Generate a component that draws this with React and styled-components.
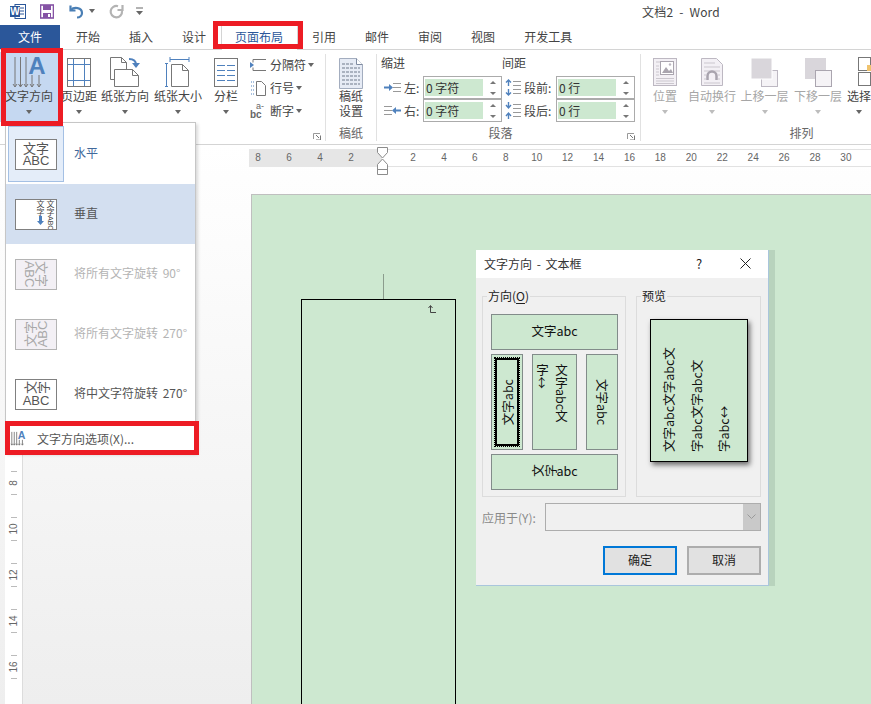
import React from 'react';
import styled, { createGlobalStyle } from 'styled-components';

const Global = createGlobalStyle`
  html, body { margin: 0; padding: 0; background: #fff; }
  body { font-family: "Noto Sans CJK SC", "Liberation Sans", sans-serif; font-size: 12px; color: #444; }
`;

const Win = styled.div`
  position: relative;
  width: 871px;
  height: 704px;
  overflow: hidden;
  background: #fff;
`;

/* title bar */
const TitleBar = styled.div`
  display: flex;
  align-items: center;
  box-sizing: border-box;
  height: 25px;
  padding: 0 0 3px 10px;
`;
const Qat = styled.span`
  display: flex;
  margin-left: ${p => p.$ml || 0}px;
`;
const Title = styled.div`
  margin-left: auto;
  margin-right: 151px;
  color: #444;
  white-space: nowrap;
  word-spacing: 3px;
  letter-spacing: 0.2px;
`;
const Caret = styled.i`
  display: block;
  width: 0;
  height: 0;
  border: 3.5px solid transparent;
  border-bottom: 0;
  border-top: 4px solid ${p => (p.$off ? '#bdbdbd' : '#666')};
`;

/* tabs */
const TabBar = styled.div`
  display: flex;
  height: 25px;
  box-sizing: border-box;
  border-bottom: 1px solid #d4d4d4;
`;
const FileTab = styled.div`
  width: 60px;
  margin-right: 1.5px;
  background: #2b579a;
  color: #fff;
  text-align: center;
  line-height: 24px;
`;
const Tab = styled.div`
  box-sizing: border-box;
  padding: 0 14.5px;
  height: 25px;
  line-height: 24px;
  color: ${p => (p.$on ? '#2b579a' : '#444')};
  background: ${p => (p.$on ? '#fff' : 'transparent')};
  box-shadow: ${p => (p.$on ? 'inset 1px 0 0 #d4d4d4, inset -1px 0 0 #d4d4d4' : 'none')};
`;

/* ribbon */
const Ribbon = styled.div`
  display: flex;
  height: 95px;
  box-sizing: border-box;
  border-bottom: 1px solid #d4d4d4;
`;
const Group = styled.div`
  position: relative;
  flex: none;
  display: flex;
  flex-direction: column;
  box-sizing: border-box;
  width: ${p => p.$w}px;
  height: 87px;
  margin-top: 4px;
  border-right: 1px solid ${p => (p.$last ? 'transparent' : '#e1e1e1')};
  padding-left: ${p => p.$pl || 0}px;
`;
const GroupBody = styled.div`
  display: flex;
  height: 72px;
`;
const GroupLabel = styled.div`
  text-align: center;
  line-height: 14px;
  color: #666;
  padding-right: ${p => p.$pr || 0}px;
`;
const Launcher = styled.svg`
  position: absolute;
  right: ${p => p.$r}px;
  top: 79px;
`;
const BigBtn = styled.div`
  flex: none;
  display: flex;
  flex-direction: column;
  align-items: center;
  width: ${p => p.$w}px;
  height: 68px;
  white-space: nowrap;
  color: ${p => (p.$off ? '#a6a6a6' : '#444')};
  background: ${p => (p.$on ? '#c5d8f1' : 'transparent')};
  box-shadow: ${p => (p.$on ? '0 -2px 0 #c5d8f1' : 'none')};
`;
const BigIcon = styled.div`
  display: flex;
  justify-content: center;
  box-sizing: border-box;
  height: 34px;
  width: 100%;
  padding-top: ${p => p.$pt}px;
  padding-left: ${p => p.$shift || 0}px;
`;
const BigText = styled.div`
  line-height: 16px;
  margin-bottom: 6px;
`;
const TwoLine = styled.div`
  line-height: 15px;
  text-align: center;
`;
const SmallCol = styled.div`
  display: flex;
  flex-direction: column;
  margin: -1px 0 0 4px;
`;
const SmallRow = styled.div`
  display: flex;
  align-items: center;
  gap: 4px;
  height: 23px;
  white-space: nowrap;
  & > i { margin-left: -2px; }
`;
const ParaGrid = styled.div`
  display: grid;
  grid-template-columns: 42px 79px 54px 79px;
  grid-template-rows: 22px 23px 23px;
`;
const ParaHead = styled.div`
  grid-column: ${p => p.$col};
  line-height: 18px;
`;
const ParaCell = styled.div`
  display: flex;
  align-items: center;
  gap: 3px;
  padding-left: 3px;
  white-space: nowrap;
`;
const Spin = styled.div`
  display: flex;
  align-items: center;
  box-sizing: border-box;
  border: 1px solid #ababab;
  background: #fff;
  padding-left: 1px;
`;
const SpinValue = styled.div`
  width: 58px;
  height: 17px;
  line-height: 17px;
  background: #cde8d0;
  color: #333;
  padding-left: 1px;
  box-sizing: border-box;
`;
const SpinArrows = styled.div`
  display: flex;
  flex-direction: column;
  gap: 8px;
  margin-left: 7px;
`;
const Tri = styled.i`
  display: block;
  width: 0;
  height: 0;
  border: 3px solid transparent;
  ${p => (p.$up ? 'border-top: 0; border-bottom: 3px solid #777;' : 'border-bottom: 0; border-top: 3px solid #777;')}
`;

/* workspace */
const Workspace = styled.div`
  position: relative;
  height: 559px;
  background: linear-gradient(#fff, #eee);
`;
const RulerRow = styled.div`
  display: flex;
  height: 18px;
  padding: 4px 0 0 249px;
`;
const RulerDark = styled.div`
  display: flex;
  flex: none;
  align-items: center;
  gap: 21px;
  width: 133px;
  box-sizing: border-box;
  padding-left: 4px;
  background: #e6e6e6;
`;
const RulerLight = styled.div`
  display: flex;
  flex: 1;
  align-items: center;
  gap: 20.93px;
  padding-left: 26px;
  background: #fff;
  box-shadow: inset 0 1px 0 #e2e2e2, inset 0 -1px 0 #e2e2e2;
`;
const RulerNum = styled.span`
  flex: none;
  display: flex;
  justify-content: center;
  width: 10px;
  font: 10px/12px "Liberation Sans", sans-serif;
  color: #666;
  white-space: nowrap;
`;
const Marker = styled.svg`
  position: absolute;
  left: 376px;
  top: 1px;
`;
const Desk = styled.div`
  display: flex;
  height: 537px;
`;
const VRuler = styled.div`
  flex: none;
  display: flex;
  flex-direction: column;
  box-sizing: border-box;
  width: 18px;
  height: 510px;
  margin: 27px 0 0 5px;
  padding-top: 277px;
  background: #fff;
  border-right: 1px solid #dcdcdc;
`;
const VCell = styled.div`
  flex: none;
  height: 46px;
  display: flex;
  flex-direction: column;
  align-items: center;
`;
const VTick = styled.i`
  display: block;
  width: 6px;
  height: 1px;
  background: #bbb;
`;
const VNum = styled.span`
  display: flex;
  align-items: center;
  justify-content: center;
  height: 22px;
  font: 10px/12px "Liberation Sans", sans-serif;
  color: #666;
  transform: rotate(-90deg);
`;
const PageSheet = styled.div`
  flex: 1;
  display: flex;
  flex-direction: column;
  box-sizing: border-box;
  margin: 27px 0 0 228px;
  padding: 79px 0 0 49px;
  background: #cde8d0;
  border-top: 1px solid #bfbfbf;
  border-left: 1px solid #bfbfbf;
`;
const Handle = styled.i`
  display: block;
  flex: none;
  width: 1px;
  height: 25px;
  margin-left: 82px;
  background: #8b9c8d;
`;
const TextBox = styled.div`
  flex: none;
  box-sizing: border-box;
  width: 155px;
  height: 440px;
  padding: 5px 0 0 126px;
  border: 1px solid #000;
`;

/* text direction menu */
const Menu = styled.div`
  position: absolute;
  left: 5px;
  top: 122px;
  box-sizing: border-box;
  width: 191px;
  height: 331px;
  padding-top: 1px;
  background: #fff;
  border: 1px solid #c6c6c6;
  box-shadow: 2px 2px 3px rgba(0, 0, 0, 0.15);
`;
const MenuRow = styled.div`
  display: flex;
  align-items: center;
  gap: 10px;
  height: 60px;
  padding-left: 2px;
  white-space: nowrap;
  background: ${p => (p.$hover ? '#d3dff0' : 'transparent')};
  color: ${p => (p.$off ? '#b4b4b4' : p.$on ? '#41699b' : '#555')};
`;
const MenuLabel = styled.span`
  padding-bottom: 4px;
  word-spacing: 2px;
`;
const ThumbWrap = styled.div`
  display: flex;
  align-items: center;
  justify-content: center;
  box-sizing: border-box;
  width: 56px;
  height: 56px;
  background: ${p => (p.$on ? '#e4edf9' : 'transparent')};
  border: 1px solid ${p => (p.$on ? '#a4c0e4' : 'transparent')};
`;
const Thumb = styled.div`
  display: flex;
  align-items: center;
  justify-content: center;
  box-sizing: border-box;
  width: 42px;
  height: 31px;
  overflow: hidden;
  background: ${p => (p.$off ? '#f3f0f5' : '#fff')};
  border: 1px solid ${p => (p.$off ? '#b4b4b4' : '#808080')};
  color: ${p => (p.$off ? '#a8a8a8' : '#555')};
`;
const ThumbText = styled.div`
  flex: none;
  font-size: 13px;
  line-height: 13px;
  text-align: center;
  white-space: nowrap;
  transform: rotate(${p => p.$deg || 0}deg);
`;
const Abc = styled.div`
  font-family: "Liberation Sans", sans-serif;
`;
const Turned = styled.span`
  display: inline-block;
  transform: rotate(-90deg);
`;
const VertThumb = styled.div`
  display: flex;
  flex-direction: row-reverse;
  align-self: stretch;
  gap: 1px;
  width: 100%;
  padding-right: 1px;
  overflow: hidden;
`;
const VertCol = styled.div`
  display: flex;
  align-items: center;
  height: 29px;
  writing-mode: vertical-rl;
  font-size: 8px;
  line-height: 9px;
  color: #444;
  white-space: nowrap;
`;
const TinyAbc = styled.span`
  font: 7px/9px "Liberation Sans", sans-serif;
`;
const MenuFoot = styled.div`
  display: flex;
  align-items: center;
  height: 28px;
  padding-left: 4px;
  gap: 11px;
  color: #555;
  white-space: nowrap;
`;

/* dialog */
const Dialog = styled.div`
  position: absolute;
  left: 476px;
  top: 250px;
  box-sizing: border-box;
  width: 293px;
  height: 336px;
  background: #f0f0f0;
  border-right: 1px solid #a9c6dc;
  border-bottom: 1px solid #a9c6dc;
  box-shadow: 6px 0 0 #b8d3bd;
`;
const DlgTitle = styled.div`
  display: flex;
  align-items: center;
  box-sizing: border-box;
  height: 28px;
  padding: 0 0 2px 8px;
  background: #fff;
  color: #333;
`;
const DlgTitleText = styled.div`
  flex: 1;
  word-spacing: 2px;
`;
const DlgIcon = styled.div`
  display: flex;
  justify-content: center;
  width: 46px;
  font-size: 13px;
  color: #222;
`;
const DlgBody = styled.div`
  padding: 18px 7px 0 6px;
`;
const Sets = styled.div`
  display: flex;
  gap: 10px;
`;
const Set = styled.div`
  position: relative;
  box-sizing: border-box;
  width: ${p => p.$w}px;
  height: 201px;
  border: 1px solid #dcdcdc;
  padding: ${p => p.$pad};
`;
const Legend = styled.div`
  position: absolute;
  left: 4px;
  top: -9px;
  padding: 0 1px;
  background: #f0f0f0;
  color: #222;
  line-height: 16px;
  u { text-underline-offset: 2px; }
`;
const OptGrid = styled.div`
  display: grid;
  grid-template-columns: 32px 45px 32px;
  grid-template-rows: 36px 96px 36px;
  gap: 4px 9px;
`;
const Opt = styled.div`
  grid-column: ${p => p.$span || 'auto'};
  box-sizing: border-box;
  display: flex;
  align-items: ${p => p.$align || 'center'};
  justify-content: center;
  padding: ${p => p.$pad || 0};
  background: #cde8d0;
  border: 1px solid #828c8a;
  font-size: 12.5px;
  color: #111;
  white-space: nowrap;
`;
const SelFrame = styled.div`
  flex: 1;
  align-self: stretch;
  display: flex;
  align-items: center;
  justify-content: center;
  margin: 3px;
  border: 2px solid #000;
  outline: 1px dotted #000;
`;
const Sideways = styled.div`
  writing-mode: vertical-rl;
  text-orientation: sideways;
  transform: rotate(${p => p.$deg || 0}deg);
`;
const Stacked = styled.div`
  writing-mode: vertical-rl;
  line-height: 19px;
`;
const PreviewBox = styled.div`
  box-sizing: border-box;
  width: 98px;
  height: 143px;
  background: #cde8d0;
  border: 1px solid #000;
  box-shadow: 2px 3px 5px rgba(0, 0, 0, 0.55);
  overflow: hidden;
`;
const PreviewText = styled(Sideways)`
  box-sizing: border-box;
  width: 100%;
  height: 100%;
  padding: 9px 4px 0 0;
  font-size: 12.5px;
  line-height: 27.5px;
  color: #111;
  white-space: nowrap;
`;
const ApplyRow = styled.div`
  display: flex;
  align-items: center;
  margin-top: 6px;
  height: 28px;
  color: #8a8a8a;
  white-space: nowrap;
`;
const ApplySelect = styled.div`
  display: flex;
  justify-content: flex-end;
  align-items: center;
  box-sizing: border-box;
  width: 217px;
  height: 28px;
  margin-left: 9px;
  border: 1px solid #adadad;
`;
const ApplyArrow = styled.div`
  display: flex;
  align-items: center;
  justify-content: center;
  width: 17px;
  height: 100%;
  background: #c9c9c9;
`;
const BtnRow = styled.div`
  display: flex;
  justify-content: flex-end;
  gap: 10px;
  margin-top: 15px;
`;
const DlgBtn = styled.div`
  box-sizing: border-box;
  width: 74px;
  height: 29px;
  line-height: 23px;
  text-align: center;
  color: #222;
  background: #e1e1e1;
  border: 2px solid ${p => (p.$main ? '#0078d7' : '#adadad')};
`;

/* red call-outs drawn over the screenshot */
const Callout = styled.div`
  position: absolute;
  box-sizing: border-box;
  left: ${p => p.$x}px;
  top: ${p => p.$y}px;
  width: ${p => p.$w}px;
  height: ${p => p.$h}px;
  border: 5px solid #ed1c24;
  pointer-events: none;
`;

const BLUE = '#4f81bd';
const GR = '#777';

const WordIcon = () => (
  <svg width="16" height="15" viewBox="0 0 16 15">
    <rect x="5" y="0.5" width="10.5" height="14" fill="#fff" stroke="#2b579a" />
    <path d="M9 4h5M9 7h5M9 10h5" stroke="#2b579a" />
    <rect x="0" y="2" width="10" height="11" fill="#2b579a" />
    <text x="5" y="11" textAnchor="middle" fontSize="10" fontWeight="700" fill="#fff" fontFamily="Liberation Sans">W</text>
  </svg>
);
const SaveIcon = () => (
  <svg width="14" height="15" viewBox="0 0 14 15">
    <rect x="0.5" y="1" width="13" height="13" fill="#fff" stroke="#8553a5" strokeWidth="1.6" />
    <rect x="3" y="1" width="8" height="5" fill="#8553a5" />
    <rect x="3" y="9" width="8" height="5" fill="#8553a5" />
    <rect x="8" y="10" width="2" height="3" fill="#fff" />
  </svg>
);
const UndoIcon = () => (
  <svg width="15" height="15" viewBox="0 0 15 15" fill="none" stroke="#4a7fb5" strokeWidth="2.2">
    <path d="M1.5 1.5v5h5" />
    <path d="M2 6c3-3.5 11-2.5 11 3 0 2.5-2 4.5-5 4.5" />
  </svg>
);
const RedoIcon = () => (
  <svg width="15" height="15" viewBox="0 0 15 15" fill="none" stroke="#b3b3b3" strokeWidth="2.2">
    <path d="M9 2.2A5.7 5.7 0 1 0 13 7" />
    <path d="M13.5 1v5h-5" />
  </svg>
);
const CustomIcon = () => (
  <svg width="7" height="8" viewBox="0 0 7 8">
    <path d="M0 1h7" stroke="#666" />
    <path d="M0 4h7L3.500 8z" fill="#666" />
  </svg>
);

const TextDirIcon = ({ small }) => (
  <svg width={small ? 16 : 34} height={small ? 15 : 34} viewBox="0 0 34 34">
    <g stroke={GR} strokeWidth={small ? 2 : 1} fill="none">
      <path d="M3 2v30M8.500 2v30M14 2v30M20 20v12M27 20v12" />
      <path d="M1 29l2 3 2-3M6.500 29l2 3 2-3M12 29l2 3 2-3M18 29l2 3 2-3M25 29l2 3 2-3" />
    </g>
    <text x="25" y="19" textAnchor="middle" fontSize="24" fontWeight="700" fill={BLUE} fontFamily="Liberation Sans">A</text>
  </svg>
);
const MarginIcon = () => (
  <svg width="24" height="30" viewBox="0 0 24 30">
    <rect x="0.500" y="1.500" width="23" height="28" fill="#fff" stroke={GR} />
    <path d="M6.500 2v27M17.500 2v27M1 7.500h22M1 23.500h22" stroke={BLUE} />
  </svg>
);
const OrientIcon = () => (
  <svg width="32" height="33" viewBox="0 0 32 33">
    <path d="M1.500 1.500h11l5 5v17h-16z" fill="#fff" stroke={GR} />
    <path d="M12.500 1.500v5h5" fill="none" stroke={GR} />
    <path d="M5.500 13.500h18l6 6v11h-24z" fill="#fff" stroke={GR} />
    <path d="M23.500 13.500v6h6" fill="none" stroke={GR} />
    <path d="M20 3c4 0 7 1 7 6" fill="none" stroke={BLUE} strokeWidth="2" />
    <path d="M23 7h8l-4 5z" fill={BLUE} />
  </svg>
);
const SizeIcon = () => (
  <svg width="26" height="32" viewBox="0 0 26 32">
    <path d="M5 2.500h19M5 0v5M24 0v5M1.500 6v24M0 6.500h3M0 29.500h3" stroke={BLUE} fill="none" />
    <path d="M6.500 7.500h11l6 6v16h-17z" fill="#fff" stroke={GR} />
    <path d="M17.500 7.500v6h6" fill="none" stroke={GR} />
  </svg>
);
const ColumnsIcon = () => (
  <svg width="24" height="30" viewBox="0 0 24 30">
    <rect x="0.500" y="1.500" width="23" height="28" fill="#fff" stroke={GR} />
    <path d="M3 8.500h8M13 8.500h8M3 13.500h8M13 13.500h8M3 18.500h8M13 18.500h8M3 23.500h8M13 23.500h8" stroke={BLUE} />
  </svg>
);
const BreakIcon = () => (
  <svg width="16" height="16" viewBox="0 0 16 16">
    <path d="M3 2.500h13M3 13.500h13M3 2.500v3M3 10.500v3" stroke={GR} fill="none" />
    <path d="M0 5l4 3-4 3z" fill={BLUE} />
  </svg>
);
const LineNoIcon = () => (
  <svg width="16" height="16" viewBox="0 0 16 16">
    <path d="M1 2h3M1 6h3M1 10h3M1 14h3" stroke={BLUE} strokeDasharray="1 1" />
    <path d="M6.500 1.500h5l4 4v10h-9z" fill="#fff" stroke={GR} />
  </svg>
);
const HyphenIcon = () => (
  <svg width="16" height="17" viewBox="0 0 16 17" fontFamily="Liberation Sans">
    <text x="6" y="7" fontSize="9" fill="#666">a-</text>
    <text x="0" y="16" fontSize="10" fontWeight="700" fill="#666">bc</text>
  </svg>
);
const DraftIcon = () => (
  <svg width="24" height="32" viewBox="0 0 24 32">
    <path d="M0.500 1.500h17l6 6v24h-23z" fill="#e6ebf5" stroke="#a3adbf" />
    <path d="M17.500 1.500v6h6" fill="#fff" stroke="#7f8ba1" />
    <path d="M3 7h12M3 11h18M3 15h18M3 19h18M3 23h18M3 27h18" stroke="#aab2c0" strokeWidth="2" />
    <path d="M6.500 6v22M10.500 6v22M14.500 6v22M18.500 10v18" stroke="#e6ebf5" />
  </svg>
);
const IndentIcon = ({ flip }) => (
  <svg width="17" height="13" viewBox="0 0 17 13">
    <path d={flip ? 'M0 2.500h8M0 6.500h8M0 10.500h8' : 'M9 2.500h8M9 6.500h8M9 10.500h8'} stroke="#999" />
    <path d={flip ? 'M17 5.500h-5V3l-4 3.500 4 3.500V7.500h5z' : 'M0 5.500h5V3l4 3.500L5 10V7.500H0z'} fill={BLUE} />
  </svg>
);
const SpacingIcon = ({ flip }) => (
  <svg width="16" height="17" viewBox="0 0 16 17">
    <path d="M8 2.500h8M8 6.500h8M8 10.500h8M8 14.500h8" stroke="#999" />
    <path
      d={flip
        ? 'M3.500 0v5M1 3l2.500 3L6 3M3.500 17v-5M1 14l2.500-3L6 14'
        : 'M3.500 7V1M1 3.500L3.500 1 6 3.500M3.500 10v6M1 13.500L3.500 16 6 13.500'}
      stroke={BLUE}
      strokeWidth="1.400"
      fill="none"
    />
  </svg>
);
const PositionIcon = () => (
  <svg width="24" height="28" viewBox="0 0 24 28">
    <rect x="0.500" y="0.500" width="23" height="27" fill="#f3f0f5" stroke="#bdb8c2" />
    <path d="M3 4h18M3 23h18M3 20.500h18M3 25.500h18M3 8h3M3 11h3M3 14h3M3 17h3" stroke="#cbc7ce" />
    <rect x="7.500" y="3.500" width="13" height="13" fill="#fff" stroke="#aaa5af" />
    <path d="M9 15l4-6 3 4 2-2 2 4z" fill="#aaa5af" />
    <circle cx="17" cy="6.500" r="1.200" fill="#bdb8c2" />
  </svg>
);
const WrapIcon = () => (
  <svg width="22" height="28" viewBox="0 0 22 28">
    <path d="M0.500 0.500h15l6 6v21h-21z" fill="#f3f0f5" stroke="#bdb8c2" />
    <path d="M3 5h11M3 9h16M3 13h16M3 25h16M3 17h2M17 17h2M3 21h2M17 21h2" stroke="#cbc7ce" />
    <path d="M6.500 22v-4a4.500 4.500 0 0 1 9 0v4" fill="none" stroke="#a9a4ae" strokeWidth="2.500" />
  </svg>
);
const LayerUpIcon = () => (
  <svg width="27" height="29" viewBox="0 0 27 29">
    <rect x="10.500" y="12.500" width="16" height="16" fill="#f5f3f6" stroke="#bdb8c2" />
    <rect x="0" y="0" width="21" height="21" fill="#d9d6db" stroke="#fff" />
  </svg>
);
const LayerDownIcon = () => (
  <svg width="27" height="29" viewBox="0 0 27 29">
    <rect x="0" y="0" width="21" height="21" fill="#d9d6db" />
    <rect x="10.500" y="12.500" width="16" height="16" fill="#f5f3f6" stroke="#aaa5af" />
  </svg>
);
const SelectIcon = () => (
  <svg width="15" height="29" viewBox="0 0 15 29">
    <rect x="0.500" y="0.500" width="12" height="13" fill="#fff" stroke="#777" />
    <rect x="0.500" y="15.500" width="12" height="13" fill="#fff" stroke="#777" />
    <rect x="9" y="8" width="6" height="6" fill="#f0c36d" />
  </svg>
);
const LaunchIcon = ({ r }) => (
  <Launcher $r={r} width="8" height="7" viewBox="0 0 8 7">
    <path d="M0.500 6V0.500H7" fill="none" stroke="#999" />
    <path d="M3 2l3 3M7.500 2.500v4.500H3" fill="none" stroke="#777" />
  </Launcher>
);
const AnchorIcon = () => (
  <svg width="8" height="9" viewBox="0 0 8 9" style={{ display: 'block' }}>
    <path d="M0.500 3L2.500 0.500 4.500 3M2.500 1v6.500H8" fill="none" stroke="#444" />
  </svg>
);

const Big = ({ label, icon, w, off, on, pad = 2, shift }) => (
  <BigBtn $w={w} $off={off} $on={on}>
    <BigIcon $pt={pad} $shift={shift}>{icon}</BigIcon>
    <BigText>{label}</BigText>
    <Caret $off={off} />
  </BigBtn>
);
const SpinBox = ({ value }) => (
  <Spin>
    <SpinValue>{value}</SpinValue>
    <SpinArrows><Tri $up /><Tri /></SpinArrows>
  </Spin>
);

const TABS = ['开始', '插入', '设计', '页面布局', '引用', '邮件', '审阅', '视图', '开发工具'];
const H_LEFT = [8, 6, 4, 2];
const H_RIGHT = [2, 4, 6, 8, 10, 12, 14, 16, 18, 20, 22, 24, 26, 28, 30];
const V_NUMS = [8, 10, 12, 14, 16];

export default function App() {
  return (
    <Win>
      <Global />
      <TitleBar>
        <WordIcon />
        <Qat $ml={14}><SaveIcon /></Qat>
        <Qat $ml={15}><UndoIcon /></Qat>
        <Qat $ml={5}><Caret /></Qat>
        <Qat $ml={14}><RedoIcon /></Qat>
        <Qat $ml={12}><CustomIcon /></Qat>
        <Title>文档2 - Word</Title>
      </TitleBar>

      <TabBar>
        <FileTab>文件</FileTab>
        {TABS.map(t => <Tab key={t} $on={t === '页面布局'}>{t}</Tab>)}
      </TabBar>

      <Ribbon>
        <Group $w={326}>
          <GroupBody>
            <Big w={58} on label="文字方向" icon={<TextDirIcon />} pad={1} />
            <Big w={42} label="页边距" icon={<MarginIcon />} pad={3} />
            <Big w={50} label="纸张方向" icon={<OrientIcon />} />
            <Big w={56} label="纸张大小" icon={<SizeIcon />} pad={3} />
            <Big w={40} label="分栏" icon={<ColumnsIcon />} pad={3} />
            <SmallCol>
              <SmallRow><BreakIcon />分隔符<Caret /></SmallRow>
              <SmallRow><LineNoIcon />行号<Caret /></SmallRow>
              <SmallRow><HyphenIcon />断字<Caret /></SmallRow>
            </SmallCol>
          </GroupBody>
          <LaunchIcon r={4} />
        </Group>

        <Group $w={51}>
          <GroupBody>
            <BigBtn $w={50}>
              <BigIcon $pt={3}><DraftIcon /></BigIcon>
              <TwoLine>稿纸<br />设置</TwoLine>
            </BigBtn>
          </GroupBody>
          <GroupLabel>稿纸</GroupLabel>
        </Group>

        <Group $w={264} $pl={4}>
          <GroupBody>
            <ParaGrid>
              <ParaHead $col="1 / 3">缩进</ParaHead>
              <ParaHead $col="3 / 5">间距</ParaHead>
              <ParaCell><IndentIcon />左:</ParaCell>
              <SpinBox value="0 字符" />
              <ParaCell><SpacingIcon />段前:</ParaCell>
              <SpinBox value="0 行" />
              <ParaCell><IndentIcon flip />右:</ParaCell>
              <SpinBox value="0 字符" />
              <ParaCell><SpacingIcon flip />段后:</ParaCell>
              <SpinBox value="0 行" />
            </ParaGrid>
          </GroupBody>
          <GroupLabel $pr={20}>段落</GroupLabel>
          <LaunchIcon r={5} />
        </Group>

        <Group $w={322} $last>
          <GroupBody>
            <Big w={48} off label="位置" icon={<PositionIcon />} pad={4} />
            <Big w={46} off label="自动换行" icon={<WrapIcon />} pad={4} />
            <Big w={59} off label="上移一层" icon={<LayerUpIcon />} pad={4} />
            <Big w={48} off label="下移一层" icon={<LayerDownIcon />} pad={4} />
            <Big w={34} label="选择" icon={<SelectIcon />} pad={3} shift={13} />
          </GroupBody>
          <GroupLabel>排列</GroupLabel>
        </Group>
      </Ribbon>

      <Workspace>
        <RulerRow>
          <RulerDark>{H_LEFT.map(n => <RulerNum key={n}>{n}</RulerNum>)}</RulerDark>
          <RulerLight>{H_RIGHT.map(n => <RulerNum key={n}>{n}</RulerNum>)}</RulerLight>
        </RulerRow>
        <Marker width="13" height="30" viewBox="0 0 13 30">
          <path d="M1.500 1.500h10v5l-5 5.500-5-5.500z M6.500 13l5 5.500v10h-10v-10z M1.500 23.500h10" fill="#fff" stroke="#8c8c8c" />
        </Marker>
        <Desk>
          <VRuler>
            {V_NUMS.map(n => (
              <VCell key={n}><VTick /><VNum>{n}</VNum><VTick /></VCell>
            ))}
          </VRuler>
          <PageSheet>
            <Handle />
            <TextBox><AnchorIcon /></TextBox>
          </PageSheet>
        </Desk>
      </Workspace>

      <Menu>
        <MenuRow $on>
          <ThumbWrap $on>
            <Thumb><ThumbText>文字<Abc>ABC</Abc></ThumbText></Thumb>
          </ThumbWrap>
          <MenuLabel>水平</MenuLabel>
        </MenuRow>
        <MenuRow $hover>
          <ThumbWrap>
            <Thumb>
              <VertThumb>
                <VertCol>文字<TinyAbc>ABC</TinyAbc></VertCol>
                <VertCol>文字<svg width="7" height="9" viewBox="0 0 7 9"><path d="M2 0h3v5h2L3.500 9 0 5h2z" fill={BLUE} /></svg></VertCol>
              </VertThumb>
            </Thumb>
          </ThumbWrap>
          <MenuLabel>垂直</MenuLabel>
        </MenuRow>
        <MenuRow $off>
          <ThumbWrap>
            <Thumb $off><ThumbText $deg={90}>文字<Abc>ABC</Abc></ThumbText></Thumb>
          </ThumbWrap>
          <MenuLabel>将所有文字旋转 90°</MenuLabel>
        </MenuRow>
        <MenuRow $off>
          <ThumbWrap>
            <Thumb $off><ThumbText $deg={-90}>文字<Abc>ABC</Abc></ThumbText></Thumb>
          </ThumbWrap>
          <MenuLabel>将所有文字旋转 270°</MenuLabel>
        </MenuRow>
        <MenuRow>
          <ThumbWrap>
            <Thumb><ThumbText><Turned>文</Turned><Turned>字</Turned><Abc>ABC</Abc></ThumbText></Thumb>
          </ThumbWrap>
          <MenuLabel>将中文字符旋转 270°</MenuLabel>
        </MenuRow>
        <MenuFoot><TextDirIcon small />文字方向选项(X)...</MenuFoot>
      </Menu>

      <Dialog>
        <DlgTitle>
          <DlgTitleText>文字方向 - 文本框</DlgTitleText>
          <DlgIcon>?</DlgIcon>
          <DlgIcon>
            <svg width="11" height="11" viewBox="0 0 11 11"><path d="M0.500 0.500l10 10M10.500 0.500l-10 10" stroke="#222" /></svg>
          </DlgIcon>
        </DlgTitle>
        <DlgBody>
          <Sets>
            <Set $w={144} $pad="17px 0 0 8px">
              <Legend>方向(<u>O</u>)</Legend>
              <OptGrid>
                <Opt $span="1 / 4" $pad="0 0 4px">文字abc</Opt>
                <Opt>
                  <SelFrame><Sideways $deg={180}>文字abc</Sideways></SelFrame>
                </Opt>
                <Opt $align="flex-start" $pad="9px 5px 0 0">
                  <Stacked>文字abc文<br />字↔</Stacked>
                </Opt>
                <Opt><Sideways>文字abc</Sideways></Opt>
                <Opt $span="1 / 4" $pad="0 0 4px"><Turned>文</Turned><Turned>字</Turned>abc</Opt>
              </OptGrid>
            </Set>
            <Set $w={125} $pad="22px 0 0 13px">
              <Legend>预览</Legend>
              <PreviewBox>
                <PreviewText $deg={180}>文字abc文字abc文<br />字abc文字abc文<br />字abc↔</PreviewText>
              </PreviewBox>
            </Set>
          </Sets>
          <ApplyRow>
            应用于(Y):
            <ApplySelect>
              <ApplyArrow>
                <svg width="9" height="6" viewBox="0 0 9 6"><path d="M0.500 0.500l4 4 4-4" fill="none" stroke="#9a9a9a" /></svg>
              </ApplyArrow>
            </ApplySelect>
          </ApplyRow>
          <BtnRow>
            <DlgBtn $main>确定</DlgBtn>
            <DlgBtn>取消</DlgBtn>
          </BtnRow>
        </DlgBody>
      </Dialog>

      <Callout $x={213} $y={21} $w={90} $h={28} />
      <Callout $x={1} $y={48} $w={62} $h={78} />
      <Callout $x={5} $y={421} $w={194} $h={34} />
    </Win>
  );
}
